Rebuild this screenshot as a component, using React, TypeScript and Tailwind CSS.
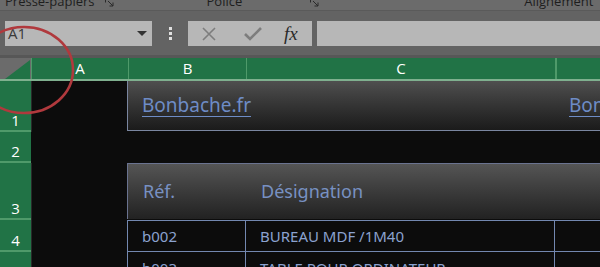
import React from 'react';

const ui = { fontFamily: '"Open Sans", "Noto Sans", sans-serif' };
const cell = { fontFamily: '"Noto Sans", "Open Sans", sans-serif' };

const Launcher = () => (
  <svg width="10" height="9" viewBox="0 0 10 9" className="text-[#2a2a2a]">
    <path d="M0.5 0.5h4M0.5 0.5v4M3 3l5 5M8 4.5v3.5h-3.5" stroke="currentColor" fill="none" strokeWidth="1" />
  </svg>
);

const RowNum = ({ n, h }: { n: number; h: string }) => (
  <div className={`w-[31px] shrink-0 ${h} bg-[#217346] border-b-2 border-[#4f9a6a] flex items-end justify-center pb-[2px] text-white text-[15px] leading-none`} style={ui}>
    {n}
  </div>
);

export default function App() {
  return (
    <div className="relative w-[600px] h-[267px] overflow-hidden bg-[#0c0c0c]">
      {/* ribbon group labels */}
      <div className="h-[11px] bg-[#6b6b6b] border-b border-[#5a5a5a] flex items-start overflow-hidden text-[13px] leading-[13px] text-[#1e1e1e]" style={ui}>
        <span className="ml-[5px] -mt-[5px]">Presse-papiers</span>
        <span className="ml-[10px] -mt-[2px]"><Launcher /></span>
        <span className="ml-[92px] -mt-[5px]">Police</span>
        <span className="ml-[68px] -mt-[2px]"><Launcher /></span>
        <span className="ml-[204px] -mt-[5px]">Alignement</span>
      </div>

      {/* formula bar */}
      <div className="h-[47px] bg-[#636363] border-b-[3px] border-[#575757] flex items-center pt-[1px]">
        <div className="ml-[5px] w-[147px] h-[25px] bg-[#b7b7b7] flex items-center justify-between px-[3px] text-[15px] text-[#3a3a3a]" style={ui}>
          <span>A1</span>
          <svg width="10" height="6" viewBox="0 0 10 6" className="mr-[2px]"><path d="M0 0h10L5 5z" fill="#333" /></svg>
        </div>
        <div className="w-[36px] flex flex-col items-center gap-[2px]">
          <span className="w-[3px] h-[3px] bg-[#e0e0e0]" />
          <span className="w-[3px] h-[3px] bg-[#e0e0e0]" />
          <span className="w-[3px] h-[3px] bg-[#e0e0e0]" />
        </div>
        <div className="w-[124px] h-[25px] bg-[#b7b7b7] flex items-center">
          <svg width="14" height="14" viewBox="0 0 14 14" className="ml-[14px]"><path d="M1 1l12 12M13 1L1 13" stroke="#7d7d7d" strokeWidth="1.6" /></svg>
          <svg width="18" height="14" viewBox="0 0 18 14" className="ml-[28px]"><path d="M1 7l5 5L17 1" stroke="#7d7d7d" strokeWidth="2.6" fill="none" /></svg>
          <span className="ml-[22px] text-[19px] italic text-[#2a2a2a] leading-none" style={{ fontFamily: '"Liberation Serif", serif' }}>fx</span>
        </div>
        <div className="ml-[5px] flex-1 h-[25px] bg-[#b7b7b7]" />
      </div>

      {/* column headers */}
      <div className="h-[23px] flex bg-[#217346] border-b-2 border-[#7fb08f] text-white text-[15px]" style={ui}>
        <div className="w-[31px] bg-[#6b6b6b] relative shrink-0">
          <svg width="31" height="21" viewBox="0 0 31 21" className="absolute left-0 top-0"><path d="M30 2L30 21L5 21z" fill="#217346" /></svg>
        </div>
        <div className="w-[97px] shrink-0 border-l border-[#4f9a6a] flex items-center justify-center leading-none">A</div>
        <div className="w-[118px] shrink-0 border-l border-[#4f9a6a] flex items-center justify-center leading-none">B</div>
        <div className="w-[309px] shrink-0 border-l border-[#4f9a6a] flex items-center justify-center leading-none">C</div>
        <div className="flex-1 border-l-2 border-[#4f9a6a]" />
      </div>

      {/* row 1 */}
      <div className="flex">
        <RowNum n={1} h="h-[51px]" />
        <div className="w-[96px] shrink-0 border-l border-[#2a2a2a] bg-[#0c0c0c]" />
        <div className="flex-1 min-w-0 overflow-hidden h-[50px] flex items-center border-l border-b border-[#7a86a0] bg-gradient-to-b from-[#4f4f4f] to-[#1b1b1b] text-[19px] text-[#6e8cc6]" style={cell}>
          <span className="w-[427px] shrink-0 pl-[14px] underline underline-offset-[4px]">Bonbache.fr</span>
          <span className="pl-[14px] underline underline-offset-[4px] whitespace-nowrap">Bonbache.fr</span>
        </div>
      </div>

      {/* row 2 */}
      <div className="flex">
        <RowNum n={2} h="h-[31px]" />
        <div className="flex-1" />
      </div>

      {/* row 3 */}
      <div className="flex">
        <RowNum n={3} h="h-[57px]" />
        <div className="w-[96px] shrink-0 border-l border-[#2a2a2a]" />
        <div className="flex-1 min-w-0 h-[56px] flex items-center border-l border-t border-[#6a7390] bg-gradient-to-b from-[#555555] to-[#222222] text-[18px] text-[#7891c2]" style={cell}>
          <span className="w-[119px] shrink-0 pl-[15px]">Réf.</span>
          <span className="pl-[14px]">Désignation</span>
        </div>
      </div>

      {/* row 4 */}
      <div className="flex">
        <RowNum n={4} h="h-[32px]" />
        <div className="w-[96px] shrink-0 border-l border-[#2a2a2a]" />
        <div className="flex-1 min-w-0 h-[32px] flex items-center border-l border-t border-b border-[#7388b0] text-[15px] text-[#8ba2d0]" style={cell}>
          <span className="w-[118px] shrink-0 h-full flex items-center pl-[14px] border-r border-[#7388b0]">b002</span>
          <span className="w-[309px] shrink-0 h-full flex items-center pl-[14px] border-r border-[#7388b0]">BUREAU MDF /1M40</span>
        </div>
      </div>

      {/* row 5 */}
      <div className="flex">
        <RowNum n={5} h="h-[32px]" />
        <div className="w-[96px] shrink-0 border-l border-[#2a2a2a]" />
        <div className="flex-1 min-w-0 h-[32px] flex items-start border-l border-[#7388b0] text-[15px] text-[#8ba2d0]" style={cell}>
          <span className="w-[118px] shrink-0 h-full pl-[14px] pt-[5px] border-r border-[#7388b0]">b003</span>
          <span className="w-[309px] shrink-0 h-full pl-[14px] pt-[5px] border-r border-[#7388b0]">TABLE POUR ORDINATEUR</span>
        </div>
      </div>

      {/* red annotation circle */}
      <svg className="absolute left-0 top-0 pointer-events-none" width="110" height="130" viewBox="0 0 110 130">
        <ellipse cx="24" cy="70" rx="49" ry="43" fill="none" stroke="#b0393d" strokeWidth="2.6" />
      </svg>
    </div>
  );
}
